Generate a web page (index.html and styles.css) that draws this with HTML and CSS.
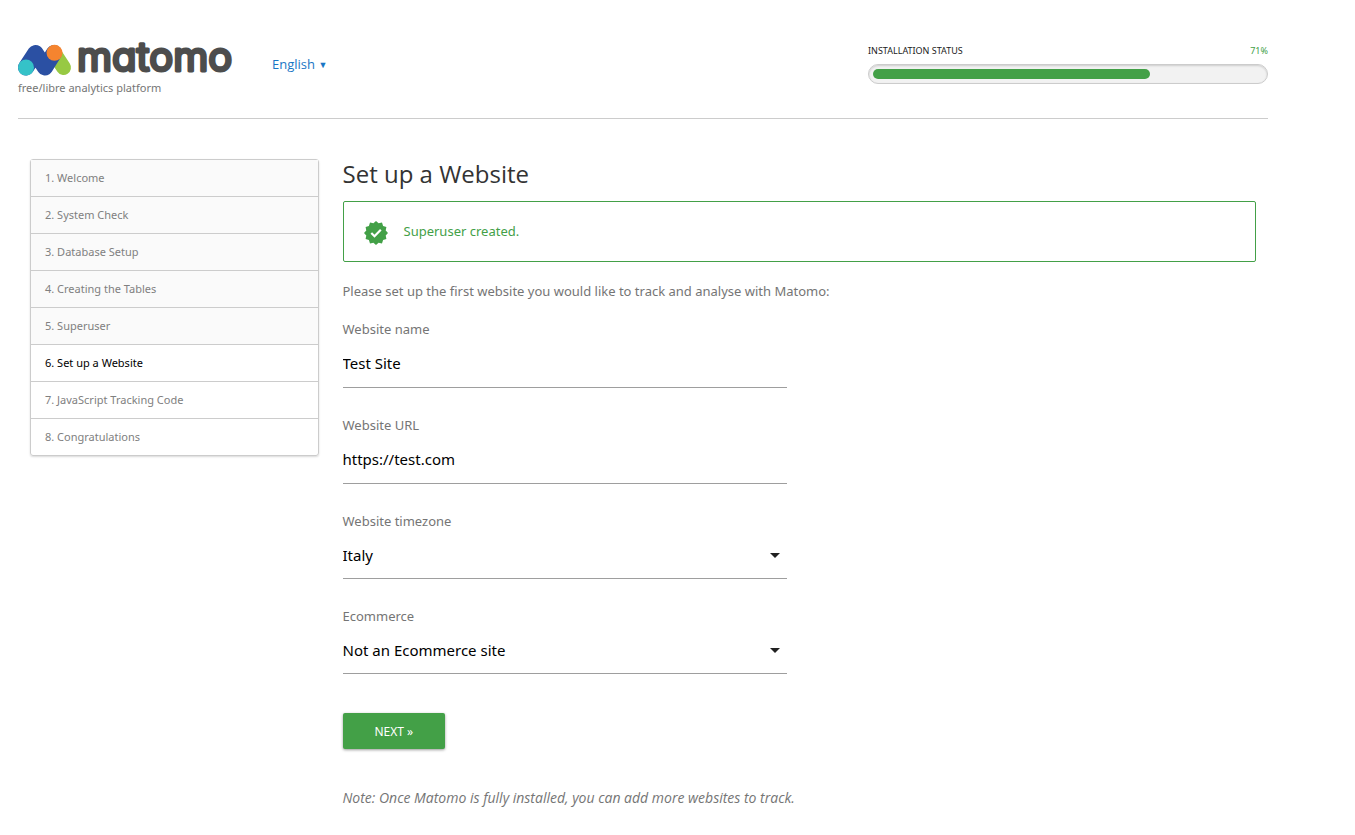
FILE: index.html
```html
<!DOCTYPE html>
<html lang="en">
<head>
    <meta charset="UTF-8">
    <meta name="viewport" content="width=device-width, initial-scale=1.0">
    <title>Matomo Installation</title>
    <link rel="stylesheet" href="styles.css">
</head>
<body>
    <div class="page">
        <header class="header">
            <div class="brand">
                <svg class="logo" width="230" height="32" viewBox="0 0 230 32" role="img" aria-label="matomo">
                    <path d="M36 9 L45.500 23.500" stroke="#97c943" stroke-width="15" stroke-linecap="round"/>
                    <path d="M8 23.500 L17.500 9 L27 23.500 L36 9" fill="none" stroke="#2b50a3" stroke-width="16" stroke-linecap="round" stroke-linejoin="round"/>
                    <circle cx="36.500" cy="8.800" r="8" fill="#f5842f"/>
                    <circle cx="8" cy="23.500" r="8" fill="#35c2c8"/>
                    <text class="wordmark" x="59" y="27">matomo</text>
                </svg>
                <p class="tagline">free/libre analytics platform</p>
            </div>
            <button type="button" class="language">English <span class="caret">▼</span></button>
            <div class="status">
                <div class="status-text">
                    <span>INSTALLATION STATUS</span>
                    <span class="percent">71%</span>
                </div>
                <div class="progress">
                    <div class="progress-bar" style="width: 71%"></div>
                </div>
            </div>
        </header>

        <div class="content">
            <ol class="steps">
                <li class="done">1. Welcome</li>
                <li class="done">2. System Check</li>
                <li class="done">3. Database Setup</li>
                <li class="done">4. Creating the Tables</li>
                <li class="done">5. Superuser</li>
                <li class="current">6. Set up a Website</li>
                <li>7. JavaScript Tracking Code</li>
                <li>8. Congratulations</li>
            </ol>

            <main>
                <h2>Set up a Website</h2>
                <div class="alert">
                    <svg width="24" height="24" viewBox="0 0 24 24">
                        <path fill="#43a047" d="M12 0 L14.600 2.300 L18 1.600 L19.100 4.900 L22.400 6 L21.700 9.400 L24 12 L21.700 14.600 L22.400 18 L19.100 19.100 L18 22.400 L14.600 21.700 L12 24 L9.400 21.700 L6 22.400 L4.900 19.100 L1.600 18 L2.300 14.600 L0 12 L2.300 9.400 L1.600 6 L4.900 4.900 L6 1.600 L9.400 2.300 Z"/>
                        <path fill="none" stroke="#fff" stroke-width="2.200" d="M7.300 12 L10.500 15.200 L16.800 8.800"/>
                    </svg>
                    <span>Superuser created.</span>
                </div>
                <p class="intro">Please set up the first website you would like to track and analyse with Matomo:</p>

                <form>
                    <div class="field">
                        <label for="siteName">Website name</label>
                        <input type="text" id="siteName" value="Test Site">
                    </div>
                    <div class="field">
                        <label for="url">Website URL</label>
                        <input type="text" id="url" value="https://test.com">
                    </div>
                    <div class="field">
                        <label for="timezone">Website timezone</label>
                        <div class="select">
                            <select id="timezone">
                                <option>Italy</option>
                            </select>
                        </div>
                    </div>
                    <div class="field">
                        <label for="ecommerce">Ecommerce</label>
                        <div class="select">
                            <select id="ecommerce">
                                <option>Not an Ecommerce site</option>
                            </select>
                        </div>
                    </div>
                    <button type="button" class="btn">NEXT »</button>
                </form>
                <p class="note">Note: Once Matomo is fully installed, you can add more websites to track.</p>
            </main>
        </div>
    </div>
</body>
</html>
```
FILE: styles.css
```css
* {
    box-sizing: border-box;
}
body {
    margin: 0;
    background: #fff;
    color: #757575;
    font-family: "Noto Sans", "Open Sans", sans-serif;
    font-size: 13px;
    line-height: 20px;
}
h2, p, ol {
    margin: 0;
}
.page {
    max-width: 1286px;
    padding: 0 18px;
}

/* header */
.header {
    display: flex;
    align-items: flex-start;
    padding: 44px 0 22px;
    border-bottom: 1px solid #ccc;
}
.brand {
    width: 254px;
}
.logo {
    display: block;
    overflow: visible;
}
.wordmark {
    font-family: Inter, sans-serif;
    font-size: 40px;
    font-weight: 400;
    font-feature-settings: "cv11";
    fill: #4d4d4d;
    stroke: #4d4d4d;
    stroke-width: 3px;
    stroke-linejoin: round;
}
.tagline {
    margin-top: 4px;
    font-size: 11px;
    line-height: 16px;
}
.language {
    margin-top: 10px;
    padding: 0;
    border: none;
    background: none;
    color: #1976c5;
    font-family: "Open Sans", sans-serif;
    font-size: 13px;
    line-height: 20px;
    cursor: pointer;
}
.caret {
    font-size: 9px;
    vertical-align: 1px;
}
.status {
    width: 400px;
    margin-left: auto;
}
.status-text {
    display: flex;
    justify-content: space-between;
    margin-bottom: 7px;
    color: #212121;
    font-size: 9px;
    line-height: 13px;
}
.percent {
    color: #43a047;
}
.progress {
    height: 20px;
    padding: 4px;
    border: 1px solid #ccc;
    border-radius: 10px;
    background: #f2f2f2;
    box-shadow: inset 0 1px 2px rgba(0, 0, 0, 0.15);
}
.progress-bar {
    height: 10px;
    border-radius: 5px;
    background: #43a047;
}

/* step list and form */
.content {
    display: grid;
    grid-template-columns: 1fr 3fr;
    align-items: start;
    padding-top: 40px;
}
.steps {
    margin: 0 12px;
    padding: 0;
    list-style: none;
    border: 1px solid #ccc;
    border-radius: 3px;
    box-shadow: 0 1px 2px rgba(0, 0, 0, 0.15);
    font-size: 11px;
    color: #808080;
}
.steps li {
    padding: 8px 14px;
    border-bottom: 1px solid #ccc;
}
.steps li:last-child {
    border-bottom: none;
}
.steps .done {
    background: #fafafa;
}
.steps .current {
    color: #000;
}
main {
    min-width: 0;
    padding: 0 12px;
}
h2 {
    color: #333;
    font-family: "Open Sans", sans-serif;
    font-size: 24px;
    font-weight: 400;
    line-height: 30px;
}
.alert {
    display: flex;
    align-items: flex-start;
    gap: 16px;
    margin-top: 12px;
    padding: 19px 20px 16px;
    border: 1px solid #43a047;
    border-radius: 2px;
    color: #43a047;
}
.intro {
    margin: 19px 0 18px;
}
.field {
    width: 50%;
    padding-right: 12px;
    margin-bottom: 27px;
}
.field label {
    display: block;
    margin-bottom: 4px;
}
.field input,
.field select {
    display: block;
    width: 100%;
    height: 45px;
    padding: 0 0 4px;
    border: none;
    border-bottom: 1px solid #9e9e9e;
    border-radius: 0;
    outline: none;
    background: none;
    color: #000;
    font-family: inherit;
    font-size: 15px;
    appearance: none;
}
.field select {
    height: 44px;
}
.select {
    position: relative;
}
.select::after {
    content: "";
    position: absolute;
    top: 18px;
    right: 7px;
    border: 5px solid transparent;
    border-top-color: #212121;
    border-bottom: none;
    pointer-events: none;
}
.btn {
    display: block;
    height: 36px;
    margin-top: 39px;
    padding: 0 32px;
    border: none;
    border-radius: 2px;
    background: #43a047;
    box-shadow: 0 1px 3px rgba(0, 0, 0, 0.4);
    color: #fff;
    font-family: inherit;
    font-size: 12px;
    cursor: pointer;
}
.note {
    margin-top: 39px;
    font-family: "Open Sans", sans-serif;
    font-size: 14px;
    font-style: italic;
}
```
